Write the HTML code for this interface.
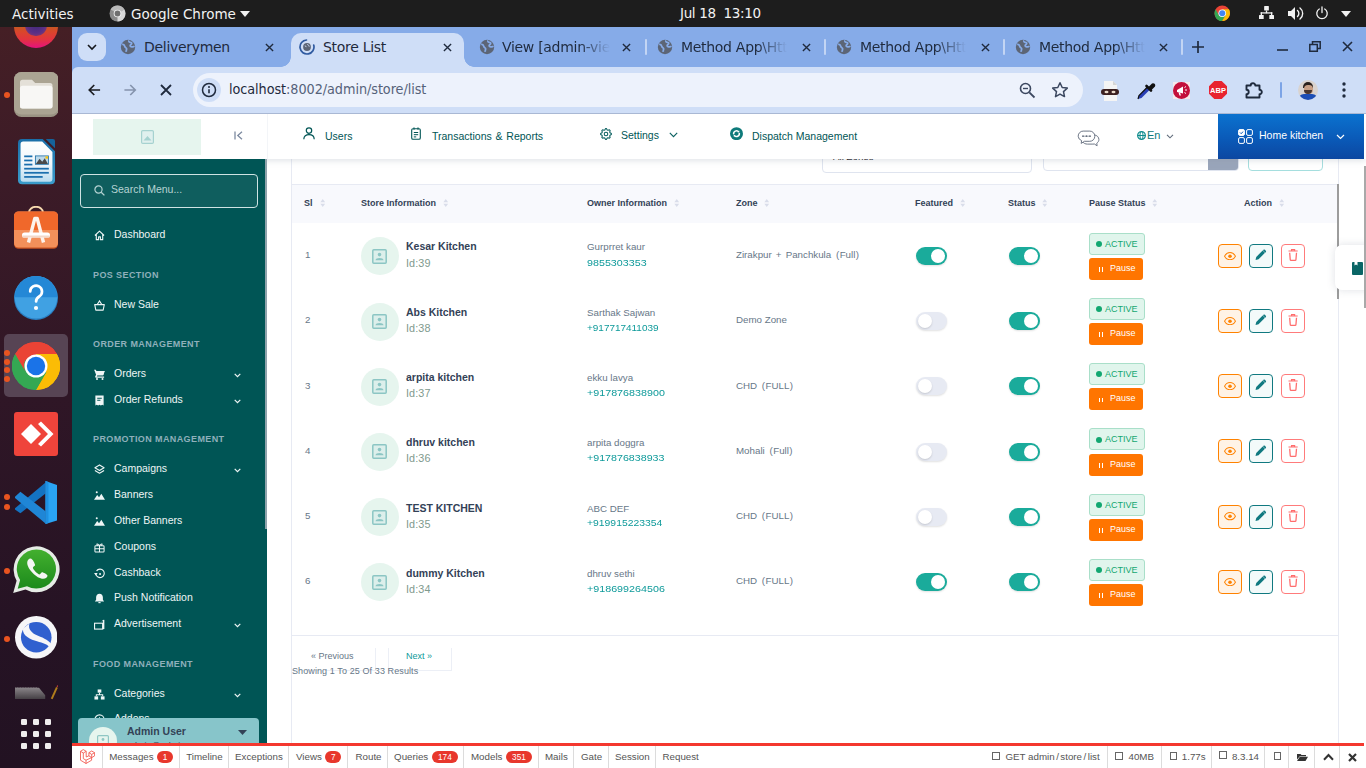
<!DOCTYPE html>
<html lang="en">
<head>
<meta charset="utf-8">
<title>Store List</title>
<style>
*{box-sizing:border-box;margin:0;padding:0}
html,body{width:1366px;height:768px;overflow:hidden;background:#fff;font-family:"Liberation Sans",sans-serif;}
.abs{position:absolute}
#screen{position:relative;width:1366px;height:768px;overflow:hidden;background:#fff}
/* ---------- GNOME top bar ---------- */
#topbar{position:absolute;left:0;top:0;width:1366px;height:27px;background:#1d1d1d;color:#f2f2f2;font-family:"DejaVu Sans","Liberation Sans",sans-serif;font-size:13.5px}
#topbar span{position:absolute;top:1px;line-height:27px;white-space:nowrap}
/* ---------- Dock ---------- */
#dock{position:absolute;left:0;top:27px;width:72px;height:741px;background:#2b1426;overflow:hidden}
/* ---------- Chrome ---------- */
#tabstrip{position:absolute;left:72px;top:27px;width:1294px;height:48px;background:#86abe8}
#toolbar{position:absolute;left:72px;top:67px;width:1294px;height:47px;background:#cfdef7;border-bottom:1px solid #a9b8d4;border-radius:6px 0 0 0}
.tabtxt{position:absolute;top:10px;font-family:"DejaVu Sans","Liberation Sans",sans-serif;font-size:14px;color:#1f2a3d;white-space:nowrap;line-height:20px;letter-spacing:-0.3px}
.fade{overflow:hidden;-webkit-mask-image:linear-gradient(90deg,#000 72%,rgba(0,0,0,0) 100%);mask-image:linear-gradient(90deg,#000 72%,rgba(0,0,0,0) 100%)}
/* ---------- Page ---------- */
#page{position:absolute;left:72px;top:114px;width:1294px;height:654px;background:#fff;overflow:hidden}
#hdr{position:absolute;left:0;top:0;width:1294px;height:45px;background:#fff;box-shadow:0 2px 6px rgba(140,152,164,.25);z-index:5}
#side{position:absolute;left:0;top:45px;width:195px;height:585px;background:#005555;overflow:hidden;z-index:6}
#main{position:absolute;left:195px;top:45px;width:1099px;height:585px;background:#fff;overflow:hidden}

#hdr .nav{position:absolute;top:0;height:45px;line-height:45px;font-size:10.500px;color:#005555;white-space:nowrap}
#side .it{position:absolute;left:42px;font-size:10.500px;color:#eef6f6;white-space:nowrap;line-height:14px}
#side .sec{position:absolute;left:21px;font-size:9px;font-weight:700;color:#8fb0bb;letter-spacing:.400px;white-space:nowrap;line-height:12px}
#side svg.ic{position:absolute;left:21.500px}
#side svg.chev{position:absolute;left:162px}

#main .th{position:absolute;top:38px;font-size:9px;font-weight:700;color:#334257;white-space:nowrap;line-height:12px}
#main .t{position:absolute;font-size:9.750px;color:#677788;white-space:nowrap;line-height:12px}
#main .nm{position:absolute;font-size:10.500px;font-weight:700;color:#334257;white-space:nowrap;line-height:13px}
#main .id{position:absolute;font-size:10.800px;color:#7f9a8e;letter-spacing:.1px;white-space:nowrap;line-height:13px}
#main .ph{color:#0e9a9a}
#main .av{position:absolute;width:38px;height:38px;border-radius:19px;background:#e6f5ee}
#main .tg{position:absolute;width:31px;height:18px;border-radius:9px;background:#1aab9b;box-shadow:0 1px 2px rgba(0,0,0,.12)}
#main .tg i{position:absolute;left:15px;top:2px;width:14px;height:14px;border-radius:7px;background:#fff}
#main .tg.off{background:#e7eaf3}
#main .tg.off i{left:2px;box-shadow:0 1px 2px rgba(0,0,0,.15)}
#main .ac{position:absolute;left:822px;width:56px;height:22px;border:1px solid #a9dfc9;border-radius:3px;background:#e0f5ec;color:#12a771;font-size:9px;line-height:20px;white-space:nowrap}
#main .ac b{position:absolute;left:6px;top:7.200px;width:6px;height:6px;border-radius:3px;background:#12a771}
#main .ac span{position:absolute;left:15px;top:0}
#main .pa{position:absolute;left:822px;width:54px;height:22px;border-radius:3px;background:#ff7500;color:#fff;font-size:9px;line-height:21px;white-space:nowrap}
#main .pa b{position:absolute;left:9.700px;top:9.200px;width:4.600px;height:4.800px;border-left:1.800px solid #fff;border-right:1.800px solid #fff}
#main .pa span{position:absolute;left:21px;top:0}
#main .bt{position:absolute;width:24px;height:24px;border-radius:4px;border:1px solid}
#main .bt svg{position:absolute}

#dbg span.d{position:absolute;top:5px;font-size:9.750px;line-height:12px;color:#555;white-space:nowrap}
#dbg i.s{position:absolute;top:0;width:1px;height:22px;background:#dcdcdc}
#dbg b.bd{position:absolute;top:5px;height:12px;border-radius:6px;background:#e8372c;color:#fff;font-size:8.250px;line-height:13px;font-weight:400;text-align:center}
#dbg u.bx{position:absolute;width:7.500px;height:8px;border:1px solid #666;text-decoration:none}
#dbg{position:absolute;left:0;top:629px;width:1292px;height:25px;background:#fff;border-top:3px solid #f4382f;z-index:9;font-size:11px;color:#444}
</style>
</head>
<body>
<div id="screen">
<!--TOPBAR-->
<div id="topbar">
<span style="left:12px">Activities</span>
<svg class="abs" style="left:109px;top:5px" width="17" height="17" viewBox="0 0 17 17"><circle cx="8.5" cy="8.5" r="8" fill="#8a8a8a"/><path d="M8.5 8.5 L1.6 4.5 A8 8 0 0 1 15.4 4.5 Z" fill="#b9b9b9"/><path d="M8.5 8.5 L15.4 4.5 A8 8 0 0 1 8.5 16.5 Z" fill="#d8d8d8"/><circle cx="8.5" cy="8.5" r="3.8" fill="#f2f2f2"/><circle cx="8.5" cy="8.5" r="2.9" fill="#6f6f6f"/></svg>
<span style="left:131px">Google Chrome</span>
<svg class="abs" style="left:240px;top:11px" width="10" height="6" viewBox="0 0 10 6"><path d="M0 0h10L5 6z" fill="#f2f2f2"/></svg>
<span style="left:680px;top:0;letter-spacing:-.35px">Jul 18&nbsp; 13:10</span>
<svg class="abs" style="left:1213.700px;top:4.800px" width="16.500" height="16.500" viewBox="0 0 17 17"><circle cx="8.5" cy="8.5" r="8" fill="#ea4335"/><path d="M8.5 8.5 L1.6 12.5 A8 8 0 0 0 8.5 16.5 L12 10.5z" fill="#34a853"/><path d="M1.6 4.5 A8 8 0 0 0 8.5 16.5 L5 10.5z" fill="#34a853"/><path d="M8.5 16.5 A8 8 0 0 0 15.4 4.5 L8.5 4.5 L12 10.5z" fill="#fbbc05"/><circle cx="8.5" cy="8.5" r="3.9" fill="#fff"/><circle cx="8.5" cy="8.5" r="3.1" fill="#4285f4"/></svg>
<svg class="abs" style="left:1259px;top:5.500px" width="15" height="13.500" viewBox="0 0 16 15" preserveAspectRatio="none"><g fill="#f2f2f2"><rect x="5.5" y="0" width="5" height="5" rx=".6"/><rect x="0" y="10" width="5" height="5" rx=".6"/><rect x="11" y="10" width="5" height="5" rx=".6"/><rect x="7.3" y="5" width="1.4" height="3"/><rect x="1.8" y="7" width="12.4" height="1.4"/><rect x="1.8" y="7" width="1.4" height="3"/><rect x="12.8" y="7" width="1.4" height="3"/></g></svg>
<svg class="abs" style="left:1287.500px;top:5.500px" width="18" height="15" viewBox="0 0 18 15"><path d="M0 5h3l4-4v13l-4-4H0z" fill="#f2f2f2"/><path d="M9.5 4.5a4 4 0 0 1 0 6M12 2a7 7 0 0 1 0 11" fill="none" stroke="#f2f2f2" stroke-width="1.4" stroke-linecap="round"/></svg>
<svg class="abs" style="left:1315px;top:5.500px" width="14" height="14" viewBox="0 0 15 15"><path d="M4.6 3.2a5.6 5.6 0 1 0 5.8 0" fill="none" stroke="#f2f2f2" stroke-width="1.4" stroke-linecap="round"/><path d="M7.5 1v6" stroke="#f2f2f2" stroke-width="1.4" stroke-linecap="round"/></svg>
<svg class="abs" style="left:1341px;top:10.500px" width="10" height="6" viewBox="0 0 10 6"><path d="M0 0h10L5 6z" fill="#f2f2f2"/></svg>
</div>
<!--DOCK-->
<div id="dock">
<div class="abs" style="left:0;top:0;width:72px;height:741px;background:linear-gradient(180deg,#451f25 0,#3c1b27 20%,#2f1626 50%,#261324 80%,#221222 100%)"></div>
<!-- firefox (cut) -->
<div class="abs" style="left:14px;top:-23px;width:44px;height:44px;border-radius:22px;background:linear-gradient(180deg,#b8621f 45%,#d9472a 62%,#e2343f 80%,#e5127e 100%)"></div><div class="abs" style="left:25px;top:-12px;width:22px;height:21px;border-radius:11px;background:radial-gradient(circle at 50% 45%,#3f2a78 0,#5a2f86 55%,#8a3a6a 85%,#c9502e 100%)"></div>
<!-- files -->
<div class="abs" style="left:4px;top:65px;width:6px;height:6px;border-radius:3px;background:#e95420"></div>
<svg class="abs" style="left:13.700px;top:44.700px" width="44.500" height="45" viewBox="0 0 44.500 45"><rect x="0" y="0" width="44.500" height="45" rx="7.500" fill="#9a9383"/><rect x="0" y="0" width="44.500" height="42.500" rx="7.500" fill="#aba493"/><path d="M6 10.200a2.500 2.500 0 0 1 2.500-2.500h9.500l3.200 3.300h14.800a2.500 2.500 0 0 1 2.500 2.500v20.400a2.500 2.500 0 0 1-2.500 2.500h-27.500a2.500 2.500 0 0 1-2.500-2.500z" fill="#e4e0d8"/><rect x="6" y="13.800" width="32.500" height="22.600" rx="2.500" fill="#f8f7f5"/></svg>
<!-- writer -->
<svg class="abs" style="left:17.800px;top:112.300px" width="37" height="45.300" viewBox="0 0 36 44"><defs><linearGradient id="wg" x1="0" y1="0" x2="0" y2="1"><stop offset="0" stop-color="#fdfefe"/><stop offset=".55" stop-color="#f1f7fb"/><stop offset="1" stop-color="#b9dcef"/></linearGradient><linearGradient id="wb" x1="0" y1="0" x2="0" y2="1"><stop offset="0" stop-color="#1a6ea8"/><stop offset="1" stop-color="#3a9ccb"/></linearGradient></defs><path d="M4 0h20l12 12v28a4 4 0 0 1-4 4H4a4 4 0 0 1-4-4V4a4 4 0 0 1 4-4z" fill="url(#wb)"/><path d="M5 2.500h18.500l10 10V39a2.500 2.500 0 0 1-2.500 2.500H5A2.500 2.500 0 0 1 2.500 39V5A2.500 2.500 0 0 1 5 2.500z" fill="url(#wg)"/><path d="M27 0h7a2 2 0 0 1 2 2v7z" fill="#15639b"/><rect x="16.500" y="16" width="13.500" height="9" fill="#1d6fa5"/><rect x="17.300" y="16.800" width="11.900" height="7.400" fill="#bcd9ea"/><path d="M17.300 24.200l3.700-5 2.600 3 2.400-3.500 3.200 5.500z" fill="#4a4a4a"/><rect x="26.700" y="16.800" width="2.500" height="2.300" fill="#f5c211"/><g fill="#1a6fae"><rect x="6" y="16" width="8" height="1.700"/><rect x="6" y="20" width="8" height="1.700"/><rect x="6" y="24" width="8" height="1.700"/><rect x="6" y="28" width="24" height="1.700"/><rect x="6" y="32" width="24" height="1.700"/><rect x="6" y="36" width="18" height="1.700"/></g></svg>
<!-- software -->
<svg class="abs" style="left:14px;top:179px" width="44" height="43" viewBox="0 0 44 43"><path d="M15 8V6.500a7 5.700 0 0 1 14 0V8" fill="none" stroke="#f6d9ae" stroke-width="1.900"/><rect x="0" y="6" width="44" height="36.800" rx="4.500" fill="#c9521f"/><rect x="0" y="5.400" width="44" height="36.200" rx="4.500" fill="#f3905a"/><path d="M0 24V9.900a4.500 4.500 0 0 1 4.500-4.500h35a4.500 4.500 0 0 1 4.500 4.500V24z" fill="#f0682b"/><path d="M14.500 36.500L20.800 12.500h2.400L29.500 36.500" fill="none" stroke="#fdf3ec" stroke-width="3.400" stroke-linejoin="round"/><rect x="8" y="26.400" width="28" height="5.200" rx="2.600" fill="#fff"/><rect x="8" y="29.400" width="28" height="2.200" rx="1.100" fill="#f3d9c9"/></svg>
<!-- help -->
<svg class="abs" style="left:14px;top:249px" width="44" height="44" viewBox="0 0 44 44"><circle cx="22" cy="22" r="22" fill="#2a7fc2"/><circle cx="22" cy="21.300" r="21.300" fill="#40a1e3"/><path d="M.7 21.300a21.300 21.300 0 0 1 42.600 0z" fill="#2488d6"/><path d="M16.200 15.500a5.900 5.900 0 1 1 9 5c-2.200 1.400-3.100 2.400-3.100 5" fill="none" stroke="#fff" stroke-width="2.700" stroke-linecap="round"/><circle cx="22" cy="32" r="2.100" fill="#fff"/></svg>
<!-- chrome active -->
<div class="abs" style="left:4px;top:307px;width:64px;height:63px;border-radius:5px;background:#574454"></div>
<div class="abs" style="left:4px;top:323.2px;width:6px;height:6px;border-radius:3px;background:#e95420"></div><div class="abs" style="left:4px;top:331.8px;width:6px;height:6px;border-radius:3px;background:#e95420"></div><div class="abs" style="left:4px;top:340.4px;width:6px;height:6px;border-radius:3px;background:#e95420"></div><div class="abs" style="left:4px;top:349px;width:6px;height:6px;border-radius:3px;background:#e95420"></div>
<svg class="abs" style="left:12px;top:315px" width="48" height="48" viewBox="0 0 48 48"><circle cx="24" cy="24" r="24" fill="#fff" opacity="0"/><path d="M24 24L3.200 12A24 24 0 0 1 44.800 12z" fill="#ea4335"/><path d="M24 0A24 24 0 0 1 44.800 12H24z" fill="#ea4335"/><path d="M3.200 12A24 24 0 0 0 24 48l10.400-18L24 24z" fill="#34a853"/><path d="M3.200 12L13.600 30 24 24z" fill="#34a853"/><path d="M44.800 12A24 24 0 0 1 24 48l10.400-18L24 12z" fill="#fbbc05"/><circle cx="24" cy="24" r="12" fill="#34a853" opacity="0"/><path d="M24 12h20.800A24 24 0 0 1 24 48l10.400-18z" fill="#fbbc05"/><path d="M13.600 30L3.200 12A24 24 0 0 0 24 48l10.400-18z" fill="#34a853"/><path d="M3.200 12A24 24 0 0 1 44.800 12H24a12 12 0 0 0-10.400 18z" fill="#ea4335"/><circle cx="24" cy="24" r="11.500" fill="#fff"/><circle cx="24" cy="24" r="9.200" fill="#1a73e8"/></svg>
<!-- anydesk -->
<svg class="abs" style="left:14px;top:385px" width="44" height="44" viewBox="0 0 44 44"><rect width="44" height="44" rx="3" fill="#ef443b"/><path d="M17 12l10 10-10 10L7 22z" fill="#fff"/><path d="M24 12l3-2.500L39.500 22 27 34.500 24 32l10-10z" fill="#fff"/></svg>
<!-- vscode -->
<div class="abs" style="left:4px;top:467px;width:6px;height:6px;border-radius:3px;background:#e95420"></div><div class="abs" style="left:4px;top:477px;width:6px;height:6px;border-radius:3px;background:#e95420"></div>
<svg class="abs" style="left:14.900px;top:453.500px" width="42" height="43" viewBox="0 0 42 43"><path d="M0 27.200L30.500 1.400v11L5.400 32.300 0 28.500z" fill="#1473c2"/><path d="M0 15.800L5.400 10.700 30.500 30.200V42.500L0 17z" fill="#1f86d6"/><path d="M30.500 0L42 4v35.500L30.500 43z" fill="#2aa4f4"/><path d="M30.500 0l3 1v41l-3 1z" fill="#1e90e2"/></svg>
<!-- whatsapp -->
<div class="abs" style="left:4px;top:541px;width:6px;height:6px;border-radius:3px;background:#e95420"></div>
<svg class="abs" style="left:12px;top:519px" width="48" height="48" viewBox="0 0 48 48"><defs><linearGradient id="wag" x1="0" y1="0" x2="0" y2="1"><stop offset="0" stop-color="#43b02f"/><stop offset="1" stop-color="#1c8a1c"/></linearGradient></defs><path d="M1.200 47l3.400-12.300A23 23 0 1 1 13.500 43.500z" fill="#e6ece6"/><path d="M5.700 42.700l2.400-8.800A19.600 19.600 0 1 1 15 40.200z" fill="url(#wag)"/><path d="M18.500 12.500c-1.600 0-3.300 1.700-3.300 4.300 0 6.300 9.600 16 16 16 2.600 0 4.300-1.700 4.300-3.300 0-.9-4.300-3.300-5.300-3.300s-1.700 2.200-2.700 2.200c-1.700 0-6.600-4.900-6.600-6.600 0-1 2.200-1.700 2.200-2.700s-2.400-6.600-4.600-6.600z" fill="#f4f6f4"/></svg>
<!-- simplenote -->
<div class="abs" style="left:4px;top:609px;width:6px;height:6px;border-radius:3px;background:#e95420"></div>
<svg class="abs" style="left:14.800px;top:589.300px" width="42.500" height="42.500" viewBox="0 0 42.500 42.500"><circle cx="21.250" cy="21.250" r="21.250" fill="#f6f6f8"/><circle cx="21.250" cy="21.250" r="15.300" fill="#3060cf"/><path d="M14.500 7.500C12.500 13 17 17.500 23 19.800S35 25 36.800 29.500L36 32.500C33 28.500 28 27 22 25.300S7 20 8 12.500z" fill="#f6f6f8"/></svg>
<!-- editor (cut) -->
<svg class="abs" style="left:14.800px;top:658px" width="43" height="15" viewBox="0 0 43 15"><defs><linearGradient id="edg" x1="0" y1="0" x2="0" y2="1"><stop offset="0" stop-color="#8d888c"/><stop offset="1" stop-color="#454045"/></linearGradient></defs><path d="M0 2.800l.8-.6.800.6.800-.6.800.6.800-.6.800.6.800-.6.800.6.800-.6.800.6.800-.6.800.6.800-.6.800.6.800-.6.800.6.800-.6.800.6.800-.6.800.6.800-.6.800.6.800-.6.800.6.800-.6.800.6.800-.6.800.6H24l6.200 7.500V14H0z" fill="url(#edg)"/><path d="M35.800 13.500l5.200-11.500 1.800.8-5.200 11.500z" fill="#b07d1c"/><path d="M41.500 1.500l.6-1.300 1.300.6-.6 1.300z" fill="#c43a3a"/></svg>
<!-- apps grid -->
<svg class="abs" style="left:21px;top:692px" width="30" height="30" viewBox="0 0 30 30"><g fill="#f0eeee"><rect x="0" y="0" width="6" height="6" rx="1.300"/><rect x="12" y="0" width="6" height="6" rx="1.300"/><rect x="24" y="0" width="6" height="6" rx="1.300"/><rect x="0" y="12" width="6" height="6" rx="1.300"/><rect x="12" y="12" width="6" height="6" rx="1.300"/><rect x="24" y="12" width="6" height="6" rx="1.300"/><rect x="0" y="24" width="6" height="6" rx="1.300"/><rect x="12" y="24" width="6" height="6" rx="1.300"/><rect x="24" y="24" width="6" height="6" rx="1.300"/></g></svg>
</div>
<!--CHROME-->
<div id="tabstrip">
<div class="abs" style="left:6px;top:6px;width:28px;height:28px;border-radius:9px;background:#cfdef7"></div>
<svg class="abs" style="left:15px;top:17px" width="10" height="7" viewBox="0 0 10 7"><path d="M1 1l4 4 4-4" stroke="#16181d" stroke-width="1.600" fill="none"/></svg>
<svg class="abs" style="left:48px;top:12px" width="16" height="16" viewBox="0 0 16 16"><circle cx="8" cy="8" r="7.200" fill="#5c6576"/><path d="M2.2 5.2c1.6.2 2.4 1 2.6 2.2.2 1.200 1.500 1.200 1.800 2.400.2 1 -.6 1.600 -.4 3.000M9 1.500c-.6 1.200 .4 1.800 1.600 1.800 1.400 0 1.400 1.600 .4 2.200-1 .6-1.200 1.800 0 2.200 1.400 .4 2.600 .2 3.400 -.600" fill="none" stroke="#86abe8" stroke-width="1.800"/></svg><span class="tabtxt" style="left:72px">Deliverymen</span><svg class="abs" style="left:192.5px;top:15.500px" width="9" height="9" viewBox="0 0 10 10"><path d="M1 1l8 8M9 1l-8 8" stroke="#1f2a3d" stroke-width="1.5" fill="none"/></svg><div class="abs" style="left:219px;top:6px;width:173px;height:34px;background:#cfdef7;border-radius:10px 10px 0 0"></div>
<div class="abs" style="left:209px;top:30px;width:10px;height:10px;background:radial-gradient(circle at 0 0,rgba(0,0,0,0) 9.5px,#cfdef7 10px)"></div>
<div class="abs" style="left:392px;top:30px;width:10px;height:10px;background:radial-gradient(circle at 100% 0,rgba(0,0,0,0) 9.5px,#cfdef7 10px)"></div>
<svg class="abs" style="left:227px;top:12px" width="16" height="16" viewBox="0 0 16 16"><path d="M7.500 1.020A7 7 0 1 0 14.760 6.190" fill="none" stroke="#2f5aa0" stroke-width="1.700" stroke-linecap="round"/><circle cx="8" cy="8" r="3.900" fill="#5c6576"/><path d="M5.800 6.800c.9.100 1.300.6 1.500 1.300M8.600 5c-.2.900.5 1.100 1.100 1.300.5.300.2 1 .5 1.400" fill="none" stroke="#cfdef7" stroke-width=".9"/></svg>
<span class="tabtxt" style="left:251px">Store List</span><svg class="abs" style="left:371px;top:15.500px" width="9" height="9" viewBox="0 0 10 10"><path d="M1 1l8 8M9 1l-8 8" stroke="#1f2a3d" stroke-width="1.5" fill="none"/></svg><svg class="abs" style="left:407px;top:12px" width="16" height="16" viewBox="0 0 16 16"><circle cx="8" cy="8" r="7.200" fill="#5c6576"/><path d="M2.2 5.2c1.6.2 2.4 1 2.6 2.2.2 1.200 1.500 1.200 1.800 2.400.2 1 -.6 1.600 -.4 3.000M9 1.500c-.6 1.200 .4 1.800 1.600 1.800 1.400 0 1.400 1.600 .4 2.200-1 .6-1.200 1.800 0 2.200 1.400 .4 2.600 .2 3.400 -.600" fill="none" stroke="#86abe8" stroke-width="1.800"/></svg><span class="tabtxt fade" style="left:430px;width:108px">View [admin-vie</span><svg class="abs" style="left:550.300px;top:15.500px" width="9" height="9" viewBox="0 0 10 10"><path d="M1 1l8 8M9 1l-8 8" stroke="#1f2a3d" stroke-width="1.5" fill="none"/></svg><div class="abs" style="left:573px;top:12px;width:2px;height:16px;background:#c3d5f4;border-radius:1px"></div><svg class="abs" style="left:585px;top:12px" width="16" height="16" viewBox="0 0 16 16"><circle cx="8" cy="8" r="7.200" fill="#5c6576"/><path d="M2.2 5.2c1.6.2 2.4 1 2.6 2.2.2 1.200 1.500 1.200 1.800 2.400.2 1 -.6 1.600 -.4 3.000M9 1.500c-.6 1.200 .4 1.800 1.600 1.800 1.400 0 1.400 1.600 .4 2.200-1 .6-1.200 1.800 0 2.200 1.400 .4 2.600 .2 3.400 -.600" fill="none" stroke="#86abe8" stroke-width="1.800"/></svg><span class="tabtxt fade" style="left:609px;width:106px">Method App\Http</span><svg class="abs" style="left:729.7px;top:15.500px" width="9" height="9" viewBox="0 0 10 10"><path d="M1 1l8 8M9 1l-8 8" stroke="#1f2a3d" stroke-width="1.5" fill="none"/></svg><div class="abs" style="left:752px;top:12px;width:2px;height:16px;background:#c3d5f4;border-radius:1px"></div><svg class="abs" style="left:764px;top:12px" width="16" height="16" viewBox="0 0 16 16"><circle cx="8" cy="8" r="7.200" fill="#5c6576"/><path d="M2.2 5.2c1.6.2 2.4 1 2.6 2.2.2 1.200 1.500 1.200 1.800 2.400.2 1 -.6 1.600 -.4 3.000M9 1.500c-.6 1.200 .4 1.800 1.600 1.800 1.400 0 1.400 1.600 .4 2.200-1 .6-1.200 1.800 0 2.200 1.400 .4 2.600 .2 3.400 -.600" fill="none" stroke="#86abe8" stroke-width="1.800"/></svg><span class="tabtxt fade" style="left:788px;width:106px">Method App\Http</span><svg class="abs" style="left:908.7px;top:15.500px" width="9" height="9" viewBox="0 0 10 10"><path d="M1 1l8 8M9 1l-8 8" stroke="#1f2a3d" stroke-width="1.5" fill="none"/></svg><div class="abs" style="left:931px;top:12px;width:2px;height:16px;background:#c3d5f4;border-radius:1px"></div><svg class="abs" style="left:943px;top:12px" width="16" height="16" viewBox="0 0 16 16"><circle cx="8" cy="8" r="7.200" fill="#5c6576"/><path d="M2.2 5.2c1.6.2 2.4 1 2.6 2.2.2 1.200 1.500 1.200 1.800 2.400.2 1 -.6 1.600 -.4 3.000M9 1.500c-.6 1.200 .4 1.800 1.600 1.800 1.400 0 1.400 1.600 .4 2.200-1 .6-1.200 1.800 0 2.200 1.400 .4 2.600 .2 3.400 -.600" fill="none" stroke="#86abe8" stroke-width="1.800"/></svg><span class="tabtxt fade" style="left:967px;width:106px">Method App\Http</span><svg class="abs" style="left:1086.7px;top:15.500px" width="9" height="9" viewBox="0 0 10 10"><path d="M1 1l8 8M9 1l-8 8" stroke="#1f2a3d" stroke-width="1.5" fill="none"/></svg><div class="abs" style="left:1109px;top:12px;width:2px;height:16px;background:#c3d5f4;border-radius:1px"></div><svg class="abs" style="left:1120px;top:14px" width="12" height="12" viewBox="0 0 12 12"><path d="M6 0v12M0 6h12" stroke="#1f2a3d" stroke-width="1.700"/></svg>
<svg class="abs" style="left:1205px;top:22px" width="11" height="2" viewBox="0 0 11 2"><path d="M0 1h11" stroke="#1f2a3d" stroke-width="1.600"/></svg>
<svg class="abs" style="left:1237px;top:14px" width="12" height="11" viewBox="0 0 12 11"><path d="M.8 3.500h7.500v6.700H.8z" fill="none" stroke="#1f2a3d" stroke-width="1.500"/><path d="M3.500 3V.8h7.700v6.700H8.600" fill="none" stroke="#1f2a3d" stroke-width="1.500"/></svg>
<svg class="abs" style="left:1270px;top:14px" width="11" height="11" viewBox="0 0 11 11"><path d="M1 1l9 9M10 1l-9 9" stroke="#1f2a3d" stroke-width="1.600" fill="none"/></svg>
</div>
<div id="toolbar">
<svg class="abs" style="left:16px;top:17px" width="12.500" height="12" viewBox="0 0 15 14"><path d="M14.500 7H2M7.500 1L1.500 7l6 6" stroke="#1b1d22" stroke-width="2" fill="none"/></svg>
<svg class="abs" style="left:52px;top:17px" width="12.500" height="12" viewBox="0 0 15 14"><path d="M.5 7H13M7.500 1l6 6-6 6" stroke="#8593ad" stroke-width="2" fill="none"/></svg>
<svg class="abs" style="left:88px;top:17px" width="12" height="12" viewBox="0 0 12 12"><path d="M1 1l10 10M11 1L1 11" stroke="#1f2a3d" stroke-width="1.800" fill="none"/></svg>
<div class="abs" style="left:121px;top:6px;width:890px;height:34px;border-radius:17px;background:#edf2fc"></div>
<div class="abs" style="left:125px;top:11px;width:24px;height:24px;border-radius:12px;background:#cfdef7"></div>
<svg class="abs" style="left:129px;top:15px" width="16" height="16" viewBox="0 0 16 16"><circle cx="8" cy="8" r="6.500" fill="none" stroke="#1f2a3d" stroke-width="1.500"/><path d="M8 7.200v4" stroke="#1f2a3d" stroke-width="1.600"/><circle cx="8" cy="5" r="1" fill="#1f2a3d"/></svg>
<span class="abs" style="left:157px;top:12px;font-family:'DejaVu Sans Condensed','DejaVu Sans','Liberation Sans',sans-serif;font-size:14.250px;line-height:20px;color:#1f2a3d;white-space:nowrap;letter-spacing:-.05px">localhost<span style="color:#56627a">:8002/admin/store/list</span></span>
<svg class="abs" style="left:947px;top:15px" width="17" height="17" viewBox="0 0 17 17"><circle cx="6.500" cy="6.500" r="5" fill="none" stroke="#3c4860" stroke-width="1.600"/><path d="M10.300 10.300L15.500 15.500" stroke="#3c4860" stroke-width="1.800"/><path d="M4 6.500h5" stroke="#3c4860" stroke-width="1.400"/></svg>
<svg class="abs" style="left:979px;top:14px" width="18" height="18" viewBox="0 0 18 18"><path d="M9 1.800l2.200 4.700 5.100.6-3.800 3.500 1 5-4.500-2.500-4.500 2.500 1-5L1.700 7.100l5.100-.6z" fill="none" stroke="#3c4860" stroke-width="1.500" stroke-linejoin="round"/></svg>
<!-- extensions -->
<svg class="abs" style="left:1029px;top:14px" width="18" height="20" viewBox="0 0 18 20"><path d="M3 0h9l4 4v16H3z" fill="#f4f4f4"/><path d="M12 0l4 4h-4z" fill="#d5d5d5"/><rect x="0" y="8" width="18" height="6" rx="3" fill="#3b1f1f"/><ellipse cx="5.500" cy="11" rx="2" ry="1.300" fill="#e9d9c9"/><ellipse cx="12.500" cy="11" rx="2" ry="1.300" fill="#e9d9c9"/></svg>
<svg class="abs" style="left:1065px;top:14px" width="19" height="19" viewBox="0 0 19 19"><path d="M1 18l1-3.500 8-8 2.500 2.500-8 8z" fill="#2a3fb5"/><path d="M9.500 5l4.500 4.500" stroke="#111" stroke-width="2.600" stroke-linecap="round"/><path d="M11 6.500l4-4a2.200 2.200 0 0 1 3 3l-4 4z" fill="#111"/><path d="M1 18l1-3.500 8-8" stroke="#111" stroke-width="1.200" fill="none"/></svg>
<svg class="abs" style="left:1101px;top:15px" width="17" height="17" viewBox="0 0 17 17"><rect width="17" height="17" fill="#f6e9ec"/><circle cx="8.500" cy="8.500" r="8.500" fill="#c3103c"/><path d="M4 8l6-3.500v7L4 10z" fill="#fff"/><path d="M5.500 10.500l1 3h1.500l-1-3" fill="#fff"/><path d="M11.500 5.500l1.500-1M12 8h2M11.500 10.500l1.500 1" stroke="#fff" stroke-width="1"/></svg>
<svg class="abs" style="left:1137px;top:14px" width="18" height="18" viewBox="0 0 18 18"><path d="M5.300 0h7.400L18 5.300v7.400L12.700 18H5.300L0 12.700V5.300z" fill="#e8232f"/><text x="9" y="12" font-family="Liberation Sans, sans-serif" font-weight="700" font-size="7.500" fill="#fff" text-anchor="middle">ABP</text></svg>
<svg class="abs" style="left:1172px;top:13px" width="20" height="20" viewBox="0 0 20 20"><path d="M2.500 5.500h4.200a2.300 2.300 0 1 1 4.600 0h4.200v4.200a2.300 2.300 0 1 1 0 4.600v3.200H2.500v-3.400a2.200 2.200 0 1 0 0-4.400z" fill="none" stroke="#1f2a3d" stroke-width="1.900" stroke-linejoin="round"/></svg>
<div class="abs" style="left:1208px;top:15px;width:2px;height:16px;border-radius:1px;background:#7da4e6"></div>
<div class="abs" style="left:1226px;top:13px;width:20px;height:20px;border-radius:10px;overflow:hidden;background:#d9d3cf"><div class="abs" style="left:5px;top:2px;width:10px;height:6px;border-radius:5px 5px 0 0;background:#2a211d"></div><div class="abs" style="left:5.500px;top:5px;width:9px;height:9px;border-radius:4px;background:#c89f85"></div><div class="abs" style="left:6px;top:10px;width:8px;height:4px;border-radius:0 0 4px 4px;background:#4a372f"></div><div class="abs" style="left:0;top:14px;width:20px;height:8px;border-radius:6px 6px 0 0;background:#1b4db5"></div></div>
<svg class="abs" style="left:1270px;top:14px" width="4" height="18" viewBox="0 0 4 18"><circle cx="2" cy="3" r="1.700" fill="#1f2a3d"/><circle cx="2" cy="9" r="1.700" fill="#1f2a3d"/><circle cx="2" cy="15" r="1.700" fill="#1f2a3d"/></svg>
</div>
<!--PAGE-->
<div id="page">
<div id="hdr">
<div class="abs" style="left:21px;top:5px;width:108px;height:36px;background:#e6f5ee"></div>
<svg class="abs" style="left:69px;top:16px" width="13" height="14" viewBox="0 0 13 14"><rect x=".6" y=".6" width="11.800" height="12.800" rx="1.200" fill="#e0f0ee" stroke="#a6d2d0" stroke-width="1.200"/><path d="M2.500 10.500l4-4.500 4 4.500z" fill="#a6d2d0"/></svg>
<svg class="abs" style="left:162px;top:17px" width="9" height="9" viewBox="0 0 9 9"><path d="M1 .5v8" stroke="#7d8aa0" stroke-width="1.300"/><path d="M8 .8L3.800 4.500 8 8.200" stroke="#7d8aa0" stroke-width="1.300" fill="none"/></svg>
<div class="abs" style="left:195px;top:0;width:1px;height:45px;background:#f3f5f8"></div>
<svg class="abs" style="left:231px;top:13px" width="12" height="13" viewBox="0 0 12 13"><circle cx="6" cy="3.600" r="2.700" fill="none" stroke="#005555" stroke-width="1.200"/><path d="M.8 12.200c0-3 2.200-4.600 5.200-4.600s5.200 1.600 5.200 4.600" fill="none" stroke="#005555" stroke-width="1.200"/></svg>
<span class="nav" style="left:253px">Users</span>
<svg class="abs" style="left:339px;top:13px" width="10" height="13" viewBox="0 0 10 13"><rect x=".7" y="1.700" width="8.600" height="10.600" rx="1.300" fill="none" stroke="#005555" stroke-width="1.100"/><path d="M3 .4v2.400M7 .4v2.400M2.800 5.500h4.400M2.800 7.700h4.400M2.800 9.900h2.400" stroke="#005555" stroke-width="1"/></svg>
<span class="nav" style="left:360px">Transactions <span style="margin:0 .9px">&amp;</span> Reports</span>
<svg class="abs" style="left:528px;top:14px" width="12" height="12" viewBox="0 0 12 12"><path d="M11.37 5.47L11.37 6.53L10.02 7.22L9.70 7.98L10.17 9.43L9.43 10.17L7.98 9.70L7.22 10.02L6.53 11.37L5.47 11.37L4.78 10.02L4.02 9.70L2.57 10.17L1.83 9.43L2.30 7.98L1.98 7.22L0.63 6.53L0.63 5.47L1.98 4.78L2.30 4.02L1.83 2.57L2.57 1.83L4.02 2.30L4.78 1.98L5.47 0.63L6.53 0.63L7.22 1.98L7.98 2.30L9.43 1.83L10.17 2.57L9.70 4.02L10.02 4.78z" fill="none" stroke="#0a6060" stroke-width="1.050" stroke-linejoin="round"/><circle cx="6" cy="6" r="1.800" fill="none" stroke="#0a6060" stroke-width="1.050"/></svg>
<span class="nav" style="left:549px;top:-1px">Settings</span>
<svg class="abs" style="left:597px;top:17.500px" width="9" height="6" viewBox="0 0 9 6"><path d="M.8.800l3.700 3.900L8.200.8" stroke="#0a6060" stroke-width="1.100" fill="none"/></svg>
<svg class="abs" style="left:658px;top:13.200px" width="13" height="13.300" viewBox="0 0 14 14"><circle cx="7" cy="7" r="7" fill="#0e7a7a"/><path d="M4 7.800a3.100 3.100 0 0 1 5.500-2.600M10 6.200a3.100 3.100 0 0 1-5.500 2.600" fill="none" stroke="#fff" stroke-width="1.600"/><path d="M9.900 3.600v2h-2zM4.100 10.400v-2h2z" fill="#fff"/></svg>
<span class="nav" style="left:680px">Dispatch Management</span>
<svg class="abs" style="left:1005px;top:14.500px" width="24" height="20" viewBox="0 0 24 20"><path d="M17.300 5.800c2.700.5 4.600 2.400 4.600 4.700 0 1.500-.8 2.800-2.100 3.600l.3 2.700-2.700-1.800c-.5.100-1 .1-1.500.1h-5.500c-2 0-3.800-.9-4.700-2.200" fill="none" stroke="#66707f" stroke-width=".95"/><path d="M6.200 2.100h6.600a5 5 0 0 1 5 5v.2a5 5 0 0 1-5 5H7.400l-3.200 2.100.4-2.800A5 5 0 0 1 1.200 7.300v-.2a5 5 0 0 1 5-5z" fill="#fff" stroke="#66707f" stroke-width=".95"/><path d="M5.500 7.200h8" stroke="#66707f" stroke-width=".6"/><circle cx="6" cy="7.200" r=".85" fill="#66707f"/><circle cx="9.500" cy="7.200" r=".85" fill="#66707f"/><circle cx="13" cy="7.200" r=".85" fill="#66707f"/></svg>
<svg class="abs" style="left:1064.800px;top:16.800px" width="9" height="9" viewBox="0 0 9 9"><circle cx="4.500" cy="4.500" r="3.800" fill="none" stroke="#0e8c8c" stroke-width="1.300"/><ellipse cx="4.500" cy="4.500" rx="1.600" ry="3.800" fill="none" stroke="#0e8c8c" stroke-width="1"/><path d="M.6 4.500h7.800" stroke="#0e8c8c" stroke-width="1"/></svg>
<span class="nav" style="left:1075px;color:#0e7a7a;font-size:11px;top:-1px">En</span>
<svg class="abs" style="left:1094px;top:20px" width="8" height="5" viewBox="0 0 8 5"><path d="M1 .8l3 3 3-3" stroke="#5f6b7a" stroke-width="1.100" fill="none"/></svg>
<div class="abs" style="left:1146px;top:0;width:146px;height:45px;background:linear-gradient(180deg,#0b72cf 0,#0a5ab8 55%,#0c47a1 100%)"></div>
<svg class="abs" style="left:1166px;top:15px" width="15" height="15" viewBox="0 0 15 15"><rect x=".6" y=".6" width="5.800" height="5.800" rx="1.400" fill="#fff" stroke="#fff" stroke-width="1"/><path d="M2 3.500l1.200 1.200L5 2.600" stroke="#0a5ab8" stroke-width="1" fill="none"/><rect x="8.600" y=".6" width="5.800" height="5.800" rx="1.400" fill="none" stroke="#fff" stroke-width="1"/><rect x=".6" y="8.600" width="5.800" height="5.800" rx="1.400" fill="none" stroke="#fff" stroke-width="1"/><rect x="8.600" y="8.600" width="5.800" height="5.800" rx="1.400" fill="none" stroke="#fff" stroke-width="1"/></svg>
<span class="nav" style="left:1187px;color:#fff;top:-1px">Home kitchen</span>
<svg class="abs" style="left:1264px;top:20px" width="9" height="6" viewBox="0 0 9 6"><path d="M1 1l3.500 3.500L8 1" stroke="#fff" stroke-width="1.200" fill="none"/></svg>
</div>
<div id="side">
<div class="abs" style="left:8px;top:15px;width:178px;height:34px;border:1px solid #cfe3e3;border-radius:4px;background:#0f5e5e"></div>
<svg class="abs" style="left:22px;top:26px" width="11" height="11" viewBox="0 0 11 11"><circle cx="4.500" cy="4.500" r="3.600" fill="none" stroke="#b6d3d3" stroke-width="1.200"/><path d="M7.200 7.200l3.200 3.200" stroke="#b6d3d3" stroke-width="1.300"/></svg>
<span class="abs" style="left:39px;top:23.200px;font-size:10.500px;line-height:14px;color:#b6d3d3;white-space:nowrap">Search Menu...</span>
<svg class="ic" style="top:70.5px" width="11" height="11" viewBox="0 0 12 12"><path d="M1 6L6 1.300 11 6M2.500 5v5.500h2.500V7.500h2V10.500h2.500V5" fill="none" stroke="#eef6f6" stroke-width="1.200" stroke-linejoin="round"/></svg><span class="it" style="top:68px">Dashboard</span>
<svg class="ic" style="top:140.5px" width="11" height="11" viewBox="0 0 12 12"><path d="M.8 5h10.400L10 11H2z" fill="none" stroke="#eef6f6" stroke-width="1.200" stroke-linejoin="round"/><path d="M3.500 5L6 1l2.500 4" fill="none" stroke="#eef6f6" stroke-width="1.200"/></svg><span class="it" style="top:138px">New Sale</span>
<svg class="ic" style="top:209.5px" width="11" height="11" viewBox="0 0 12 12"><path d="M0 .8h2l.6 1.500h9L10 6.800H3.800L3 8.300h8v1.200H2.200c-.8 0-1.200-.8-.8-1.500l.9-1.600L.6 2z" fill="#eef6f6"/><path d="M2.300 2.300h9.300L10 6.800H3.800z" fill="#eef6f6"/><circle cx="3.300" cy="10.800" r="1.100" fill="#eef6f6"/><circle cx="9.300" cy="10.800" r="1.100" fill="#eef6f6"/></svg><span class="it" style="top:207px">Orders</span><svg class="chev" style="top:213.5px" width="7" height="5" viewBox="0 0 7 5"><path d="M.7.800l2.800 2.800L6.300.8" stroke="#eef6f6" stroke-width="1.200" fill="none"/></svg>
<svg class="ic" style="top:235.5px" width="11" height="11" viewBox="0 0 12 12"><path d="M1.500.5h9v11l-1.500-1-1.500 1-1.500-1-1.500 1-1.500-1-1.500 1z" fill="#eef6f6"/><path d="M3.500 3.500h5M3.500 5.800h3.500" stroke="#005555" stroke-width="1.100"/></svg><span class="it" style="top:233px">Order Refunds</span><svg class="chev" style="top:239.5px" width="7" height="5" viewBox="0 0 7 5"><path d="M.7.800l2.800 2.800L6.300.8" stroke="#eef6f6" stroke-width="1.200" fill="none"/></svg>
<svg class="ic" style="top:304.5px" width="11" height="11" viewBox="0 0 12 12"><path d="M6 1l5 3-5 3-5-3z" fill="none" stroke="#eef6f6" stroke-width="1.200" stroke-linejoin="round"/><path d="M1 7l5 3 5-3" fill="none" stroke="#eef6f6" stroke-width="1.200" stroke-linejoin="round"/></svg><span class="it" style="top:302px">Campaigns</span><svg class="chev" style="top:308.5px" width="7" height="5" viewBox="0 0 7 5"><path d="M.7.800l2.800 2.800L6.300.8" stroke="#eef6f6" stroke-width="1.200" fill="none"/></svg>
<svg class="ic" style="top:330.5px" width="11" height="11" viewBox="0 0 12 12"><path d="M0 10.500l3.500-5 2 2.500L8 4l4 6.500z" fill="#eef6f6"/><circle cx="3" cy="2.500" r="1.100" fill="#eef6f6"/></svg><span class="it" style="top:328px">Banners</span>
<svg class="ic" style="top:356.5px" width="11" height="11" viewBox="0 0 12 12"><path d="M0 10.500l3.500-5 2 2.500L8 4l4 6.500z" fill="#eef6f6"/><circle cx="3" cy="2.500" r="1.100" fill="#eef6f6"/></svg><span class="it" style="top:354px">Other Banners</span>
<svg class="ic" style="top:382.5px" width="11" height="11" viewBox="0 0 12 12"><rect x="1" y="4" width="10" height="7" rx="1" fill="none" stroke="#eef6f6" stroke-width="1.100"/><path d="M6 4v7M1 7.300h10M4.200 4C2 2.500 3.500.8 6 3.800 8.500.8 10 2.500 7.800 4" fill="none" stroke="#eef6f6" stroke-width="1.100"/></svg><span class="it" style="top:380px">Coupons</span>
<svg class="ic" style="top:408.5px" width="11" height="11" viewBox="0 0 12 12"><path d="M2.800 3.200A4.600 4.600 0 1 1 2 6.500" fill="none" stroke="#eef6f6" stroke-width="1.200"/><path d="M0 5.500h4L2 8.300z" fill="#eef6f6"/><circle cx="6.600" cy="6.500" r="1.100" fill="#eef6f6"/></svg><span class="it" style="top:406px">Cashback</span>
<svg class="ic" style="top:433.5px" width="11" height="11" viewBox="0 0 12 12"><path d="M6 .8c2.200 0 3.700 1.600 3.700 4v2.500l1.300 2H1l1.300-2V4.800C2.300 2.400 3.800.8 6 .8z" fill="#eef6f6"/><path d="M4.800 10.500h2.400" stroke="#eef6f6" stroke-width="1.200"/></svg><span class="it" style="top:431px">Push Notification</span>
<svg class="ic" style="top:459.5px" width="11" height="11" viewBox="0 0 12 12"><rect x=".6" y="4.600" width="8.800" height="6.400" fill="none" stroke="#eef6f6" stroke-width="1.200"/><path d="M10.500 1v10" stroke="#eef6f6" stroke-width="1.600"/><path d="M9 2.500l1.500-1.500" stroke="#eef6f6" stroke-width="1"/></svg><span class="it" style="top:457px">Advertisement</span><svg class="chev" style="top:463.5px" width="7" height="5" viewBox="0 0 7 5"><path d="M.7.800l2.800 2.800L6.300.8" stroke="#eef6f6" stroke-width="1.200" fill="none"/></svg>
<svg class="ic" style="top:529.5px" width="11" height="11" viewBox="0 0 12 12"><rect x="4" y=".5" width="4" height="3.500" fill="#eef6f6"/><rect x=".5" y="8" width="4" height="3.500" fill="#eef6f6"/><rect x="7.500" y="8" width="4" height="3.500" fill="#eef6f6"/><path d="M6 4v2.200M2.500 8V6.200h7V8" fill="none" stroke="#eef6f6" stroke-width="1.100"/></svg><span class="it" style="top:527px">Categories</span><svg class="chev" style="top:533.5px" width="7" height="5" viewBox="0 0 7 5"><path d="M.7.800l2.800 2.800L6.300.8" stroke="#eef6f6" stroke-width="1.200" fill="none"/></svg>
<svg class="ic" style="top:554.5px" width="11" height="11" viewBox="0 0 12 12"><circle cx="6" cy="6" r="5" fill="none" stroke="#eef6f6" stroke-width="1.200"/><path d="M6 3.500v5M3.500 6h5" stroke="#eef6f6" stroke-width="1.200"/></svg><span class="it" style="top:552px">Addons</span>
<span class="sec" style="top:110.0px">POS SECTION</span>
<span class="sec" style="top:179.0px">ORDER MANAGEMENT</span>
<span class="sec" style="top:274.0px">PROMOTION MANAGEMENT</span>
<span class="sec" style="top:499.0px">FOOD MANAGEMENT</span>
<div class="abs" style="left:193px;top:0;width:3px;height:370px;background:#8fa3ab"></div>
<div class="abs" style="left:6px;top:559px;width:181px;height:40px;border-radius:4px;background:#87c5ca"></div>
<div class="abs" style="left:17px;top:568px;width:28px;height:28px;border-radius:14px;background:#e6f5ee"></div>
<svg class="abs" style="left:25px;top:576px" width="12" height="12" viewBox="0 0 12 12"><rect x=".6" y=".6" width="10.800" height="10.800" rx="1" fill="none" stroke="#8fc7c4" stroke-width="1.200"/><circle cx="6" cy="4.500" r="1.400" fill="#8fc7c4"/><path d="M3 9.500c0-2 6-2 6 0z" fill="#8fc7c4"/></svg>
<span class="abs" style="left:55px;top:565px;font-size:10.500px;font-weight:700;color:#334257;line-height:14px;white-space:nowrap">Admin User</span>
<span class="abs" style="left:55px;top:581px;font-size:9px;color:#334257;line-height:12px;white-space:nowrap">admin@admin.com</span>
<svg class="abs" style="left:166px;top:571px" width="9" height="5" viewBox="0 0 9 5"><path d="M0 0h9L4.500 5z" fill="#334257"/></svg>
</div>
<div id="main">
<div class="abs" style="left:24px;top:0;width:1px;height:585px;background:#e7eaf3"></div>
<div class="abs" style="left:1071px;top:0;width:1px;height:585px;background:#e7eaf3"></div>
<div class="abs" style="left:555px;top:-20px;width:210px;height:34px;border:1px solid #dfe4ef;border-radius:4px"></div>
<span class="abs" style="left:566px;top:-8.200px;font-size:9.750px;color:#1e2022;line-height:12px">All Zones</span>
<div class="abs" style="left:776px;top:-20px;width:196px;height:31.500px;border:1px solid #dfe4ef;border-radius:4px;overflow:hidden"><div class="abs" style="right:0;top:0;width:30px;height:32px;background:#99a5ba"></div></div>
<div class="abs" style="left:981px;top:-20px;width:75px;height:31.500px;border:1px solid #a5dede;border-radius:4px"></div>
<div class="abs" style="left:25px;top:25px;width:1046px;height:39px;background:#f8f9fd;border-top:1px solid #e7eaf3"></div>
<span class="th" style="left:37px">Sl</span><svg class="abs" style="left:53.3px;top:39.500px" width="5.500" height="8" viewBox="0 0 6 10"><path d="M3 0l3 4H0zM3 10L0 6h6z" fill="#d9ddea"/></svg>
<span class="th" style="left:94px">Store Information</span><svg class="abs" style="left:176.3px;top:39.500px" width="5.500" height="8" viewBox="0 0 6 10"><path d="M3 0l3 4H0zM3 10L0 6h6z" fill="#d9ddea"/></svg>
<span class="th" style="left:320px">Owner Information</span><svg class="abs" style="left:407.3px;top:39.500px" width="5.500" height="8" viewBox="0 0 6 10"><path d="M3 0l3 4H0zM3 10L0 6h6z" fill="#d9ddea"/></svg>
<span class="th" style="left:469px">Zone</span><svg class="abs" style="left:497.3px;top:39.500px" width="5.500" height="8" viewBox="0 0 6 10"><path d="M3 0l3 4H0zM3 10L0 6h6z" fill="#d9ddea"/></svg>
<span class="th" style="left:648px">Featured</span><svg class="abs" style="left:693.3px;top:39.500px" width="5.500" height="8" viewBox="0 0 6 10"><path d="M3 0l3 4H0zM3 10L0 6h6z" fill="#d9ddea"/></svg>
<span class="th" style="left:741px">Status</span><svg class="abs" style="left:775.3px;top:39.500px" width="5.500" height="8" viewBox="0 0 6 10"><path d="M3 0l3 4H0zM3 10L0 6h6z" fill="#d9ddea"/></svg>
<span class="th" style="left:822px">Pause Status</span><svg class="abs" style="left:885.3px;top:39.500px" width="5.500" height="8" viewBox="0 0 6 10"><path d="M3 0l3 4H0zM3 10L0 6h6z" fill="#d9ddea"/></svg>
<span class="th" style="left:977px">Action</span><svg class="abs" style="left:1012.3px;top:39.500px" width="5.500" height="8" viewBox="0 0 6 10"><path d="M3 0l3 4H0zM3 10L0 6h6z" fill="#d9ddea"/></svg>
<span class="t" style="left:38px;top:90.2px">1</span><div class="av" style="left:93.7px;top:78.3px"><svg class="abs" style="left:11.500px;top:11.500px" width="15" height="15" viewBox="0 0 15 15"><rect x=".8" y=".8" width="13.400" height="13.400" rx="1" fill="#dcefeb" stroke="#8cc6c4" stroke-width="1.500"/><circle cx="7.500" cy="5.600" r="1.800" fill="#8cc6c4"/><path d="M3.500 11.300c0-3 8-3 8 0z" fill="#8cc6c4"/></svg></div><span class="nm" style="left:139px;top:80.9px">Kesar Kitchen</span><span class="id" style="left:139px;top:97.7px">Id:39</span><span class="t" style="left:320px;top:81.9px">Gurprret kaur</span><span class="t ph" style="left:320px;top:97.5px;transform:scaleX(1.1);transform-origin:0 50%">9855303353</span><span class="t" style="left:469px;top:90.2px">Zirakpur <span style="margin:0 1.400px">+</span> Panchkula <span style="margin:0 .5px 0 2px">(</span>Full<span style="margin-left:.3px">)</span></span><div class="tg" style="left:649px;top:88.0px"><i></i></div><div class="tg" style="left:742px;top:88.0px"><i></i></div><div class="ac" style="top:73.8px"><b></b><span>ACTIVE</span></div><div class="pa" style="top:99.0px"><b></b><span>Pause</span></div><div class="bt" style="left:951px;top:84.8px;border-color:#ff8200;background:#fff3e6"><svg style="left:5px;top:6.800px" width="12" height="8.300" viewBox="0 0 13 9"><path d="M.6 4.500C2 1.800 4 .6 6.500.6s4.500 1.200 5.900 3.900C11 7.200 9 8.400 6.500 8.400S2 7.200.6 4.500z" fill="none" stroke="#ff8200" stroke-width="1.100"/><circle cx="6.500" cy="4.500" r="1.900" fill="#ff8200"/></svg></div><div class="bt" style="left:982px;top:84.8px;border-color:#107980;background:#f3fafa"><svg style="left:5px;top:4.300px" width="11.500" height="11.500" viewBox="0 0 12 12"><path d="M.5 11.500l.8-3.200L8 1.600l2.400 2.400-6.700 6.700z" fill="#107980"/><path d="M8.800.9a1.100 1.100 0 0 1 1.600 0l.8.800a1.100 1.100 0 0 1 0 1.600l-.5.500-2.400-2.400z" fill="#107980"/></svg></div><div class="bt" style="left:1014px;top:84.8px;border-color:#ff7b7b;background:#fff"><svg style="left:5.800px;top:4.300px" width="10.200" height="12" viewBox="0 0 11 13"><path d="M.5 2.200h10M3.800 2V.7h3.400V2" fill="none" stroke="#ff6d6d" stroke-width="1.200"/><path d="M1.800 4l.6 7.300c0 .6.500 1 1 1h4.200c.5 0 1-.4 1-1L9.200 4" fill="none" stroke="#ff6d6d" stroke-width="1.400"/></svg></div>
<span class="t" style="left:38px;top:155.4px">2</span><div class="av" style="left:93.7px;top:143.5px"><svg class="abs" style="left:11.500px;top:11.500px" width="15" height="15" viewBox="0 0 15 15"><rect x=".8" y=".8" width="13.400" height="13.400" rx="1" fill="#dcefeb" stroke="#8cc6c4" stroke-width="1.500"/><circle cx="7.500" cy="5.600" r="1.800" fill="#8cc6c4"/><path d="M3.500 11.300c0-3 8-3 8 0z" fill="#8cc6c4"/></svg></div><span class="nm" style="left:139px;top:146.9px">Abs Kitchen</span><span class="id" style="left:139px;top:162.9px">Id:38</span><span class="t" style="left:320px;top:147.9px">Sarthak Sajwan</span><span class="t ph" style="left:320px;top:162.7px;transform:scaleX(1.021);transform-origin:0 50%">+917717411039</span><span class="t" style="left:469px;top:155.4px">Demo Zone</span><div class="tg off" style="left:649px;top:153.2px"><i></i></div><div class="tg" style="left:742px;top:153.2px"><i></i></div><div class="ac" style="top:139.0px"><b></b><span>ACTIVE</span></div><div class="pa" style="top:164.2px"><b></b><span>Pause</span></div><div class="bt" style="left:951px;top:150.0px;border-color:#ff8200;background:#fff3e6"><svg style="left:5px;top:6.800px" width="12" height="8.300" viewBox="0 0 13 9"><path d="M.6 4.500C2 1.800 4 .6 6.500.6s4.500 1.200 5.900 3.900C11 7.200 9 8.400 6.500 8.400S2 7.200.6 4.500z" fill="none" stroke="#ff8200" stroke-width="1.100"/><circle cx="6.500" cy="4.500" r="1.900" fill="#ff8200"/></svg></div><div class="bt" style="left:982px;top:150.0px;border-color:#107980;background:#f3fafa"><svg style="left:5px;top:4.300px" width="11.500" height="11.500" viewBox="0 0 12 12"><path d="M.5 11.500l.8-3.200L8 1.600l2.400 2.400-6.700 6.700z" fill="#107980"/><path d="M8.800.9a1.100 1.100 0 0 1 1.600 0l.8.800a1.100 1.100 0 0 1 0 1.600l-.5.500-2.400-2.400z" fill="#107980"/></svg></div><div class="bt" style="left:1014px;top:150.0px;border-color:#ff7b7b;background:#fff"><svg style="left:5.800px;top:4.300px" width="10.200" height="12" viewBox="0 0 11 13"><path d="M.5 2.200h10M3.800 2V.7h3.400V2" fill="none" stroke="#ff6d6d" stroke-width="1.200"/><path d="M1.800 4l.6 7.300c0 .6.500 1 1 1h4.200c.5 0 1-.4 1-1L9.200 4" fill="none" stroke="#ff6d6d" stroke-width="1.400"/></svg></div>
<span class="t" style="left:38px;top:220.6px">3</span><div class="av" style="left:93.7px;top:208.7px"><svg class="abs" style="left:11.500px;top:11.500px" width="15" height="15" viewBox="0 0 15 15"><rect x=".8" y=".8" width="13.400" height="13.400" rx="1" fill="#dcefeb" stroke="#8cc6c4" stroke-width="1.500"/><circle cx="7.500" cy="5.600" r="1.800" fill="#8cc6c4"/><path d="M3.500 11.300c0-3 8-3 8 0z" fill="#8cc6c4"/></svg></div><span class="nm" style="left:139px;top:212.1px">arpita kitchen</span><span class="id" style="left:139px;top:228.1px">Id:37</span><span class="t" style="left:320px;top:213.1px">ekku lavya</span><span class="t ph" style="left:320px;top:227.9px;transform:scaleX(1.1);transform-origin:0 50%">+917876838900</span><span class="t" style="left:469px;top:220.6px">CHD <span style="margin:0 .5px 0 2px">(</span>FULL<span style="margin-left:.3px">)</span></span><div class="tg off" style="left:649px;top:218.4px"><i></i></div><div class="tg" style="left:742px;top:218.4px"><i></i></div><div class="ac" style="top:204.2px"><b></b><span>ACTIVE</span></div><div class="pa" style="top:229.4px"><b></b><span>Pause</span></div><div class="bt" style="left:951px;top:215.2px;border-color:#ff8200;background:#fff3e6"><svg style="left:5px;top:6.800px" width="12" height="8.300" viewBox="0 0 13 9"><path d="M.6 4.500C2 1.800 4 .6 6.500.6s4.500 1.200 5.900 3.900C11 7.200 9 8.400 6.500 8.400S2 7.200.6 4.500z" fill="none" stroke="#ff8200" stroke-width="1.100"/><circle cx="6.500" cy="4.500" r="1.900" fill="#ff8200"/></svg></div><div class="bt" style="left:982px;top:215.2px;border-color:#107980;background:#f3fafa"><svg style="left:5px;top:4.300px" width="11.500" height="11.500" viewBox="0 0 12 12"><path d="M.5 11.500l.8-3.200L8 1.600l2.400 2.400-6.700 6.700z" fill="#107980"/><path d="M8.800.9a1.100 1.100 0 0 1 1.600 0l.8.800a1.100 1.100 0 0 1 0 1.600l-.5.500-2.400-2.400z" fill="#107980"/></svg></div><div class="bt" style="left:1014px;top:215.2px;border-color:#ff7b7b;background:#fff"><svg style="left:5.800px;top:4.300px" width="10.200" height="12" viewBox="0 0 11 13"><path d="M.5 2.200h10M3.800 2V.7h3.400V2" fill="none" stroke="#ff6d6d" stroke-width="1.200"/><path d="M1.800 4l.6 7.300c0 .6.500 1 1 1h4.200c.5 0 1-.4 1-1L9.200 4" fill="none" stroke="#ff6d6d" stroke-width="1.400"/></svg></div>
<span class="t" style="left:38px;top:285.8px">4</span><div class="av" style="left:93.7px;top:273.9px"><svg class="abs" style="left:11.500px;top:11.500px" width="15" height="15" viewBox="0 0 15 15"><rect x=".8" y=".8" width="13.400" height="13.400" rx="1" fill="#dcefeb" stroke="#8cc6c4" stroke-width="1.500"/><circle cx="7.500" cy="5.600" r="1.800" fill="#8cc6c4"/><path d="M3.500 11.300c0-3 8-3 8 0z" fill="#8cc6c4"/></svg></div><span class="nm" style="left:139px;top:277.3px">dhruv kitchen</span><span class="id" style="left:139px;top:293.3px">Id:36</span><span class="t" style="left:320px;top:278.3px">arpita doggra</span><span class="t ph" style="left:320px;top:293.1px;transform:scaleX(1.095);transform-origin:0 50%">+917876838933</span><span class="t" style="left:469px;top:285.8px">Mohali <span style="margin:0 .5px 0 2px">(</span>Full<span style="margin-left:.3px">)</span></span><div class="tg off" style="left:649px;top:283.6px"><i></i></div><div class="tg" style="left:742px;top:283.6px"><i></i></div><div class="ac" style="top:269.4px"><b></b><span>ACTIVE</span></div><div class="pa" style="top:294.6px"><b></b><span>Pause</span></div><div class="bt" style="left:951px;top:280.4px;border-color:#ff8200;background:#fff3e6"><svg style="left:5px;top:6.800px" width="12" height="8.300" viewBox="0 0 13 9"><path d="M.6 4.500C2 1.800 4 .6 6.500.6s4.500 1.200 5.900 3.900C11 7.200 9 8.400 6.500 8.400S2 7.200.6 4.500z" fill="none" stroke="#ff8200" stroke-width="1.100"/><circle cx="6.500" cy="4.500" r="1.900" fill="#ff8200"/></svg></div><div class="bt" style="left:982px;top:280.4px;border-color:#107980;background:#f3fafa"><svg style="left:5px;top:4.300px" width="11.500" height="11.500" viewBox="0 0 12 12"><path d="M.5 11.500l.8-3.200L8 1.600l2.400 2.400-6.700 6.700z" fill="#107980"/><path d="M8.800.9a1.100 1.100 0 0 1 1.600 0l.8.800a1.100 1.100 0 0 1 0 1.600l-.5.500-2.400-2.400z" fill="#107980"/></svg></div><div class="bt" style="left:1014px;top:280.4px;border-color:#ff7b7b;background:#fff"><svg style="left:5.800px;top:4.300px" width="10.200" height="12" viewBox="0 0 11 13"><path d="M.5 2.200h10M3.800 2V.7h3.400V2" fill="none" stroke="#ff6d6d" stroke-width="1.200"/><path d="M1.800 4l.6 7.300c0 .6.500 1 1 1h4.200c.5 0 1-.4 1-1L9.200 4" fill="none" stroke="#ff6d6d" stroke-width="1.400"/></svg></div>
<span class="t" style="left:38px;top:351.0px">5</span><div class="av" style="left:93.7px;top:339.1px"><svg class="abs" style="left:11.500px;top:11.500px" width="15" height="15" viewBox="0 0 15 15"><rect x=".8" y=".8" width="13.400" height="13.400" rx="1" fill="#dcefeb" stroke="#8cc6c4" stroke-width="1.500"/><circle cx="7.500" cy="5.600" r="1.800" fill="#8cc6c4"/><path d="M3.500 11.300c0-3 8-3 8 0z" fill="#8cc6c4"/></svg></div><span class="nm" style="left:139px;top:342.5px">TEST KITCHEN</span><span class="id" style="left:139px;top:358.5px">Id:35</span><span class="t" style="left:320px;top:343.5px">ABC DEF</span><span class="t ph" style="left:320px;top:358.3px;transform:scaleX(1.064);transform-origin:0 50%">+919915223354</span><span class="t" style="left:469px;top:351.0px">CHD <span style="margin:0 .5px 0 2px">(</span>FULL<span style="margin-left:.3px">)</span></span><div class="tg off" style="left:649px;top:348.8px"><i></i></div><div class="tg" style="left:742px;top:348.8px"><i></i></div><div class="ac" style="top:334.6px"><b></b><span>ACTIVE</span></div><div class="pa" style="top:359.8px"><b></b><span>Pause</span></div><div class="bt" style="left:951px;top:345.6px;border-color:#ff8200;background:#fff3e6"><svg style="left:5px;top:6.800px" width="12" height="8.300" viewBox="0 0 13 9"><path d="M.6 4.500C2 1.800 4 .6 6.500.6s4.500 1.200 5.900 3.900C11 7.200 9 8.400 6.500 8.400S2 7.200.6 4.500z" fill="none" stroke="#ff8200" stroke-width="1.100"/><circle cx="6.500" cy="4.500" r="1.900" fill="#ff8200"/></svg></div><div class="bt" style="left:982px;top:345.6px;border-color:#107980;background:#f3fafa"><svg style="left:5px;top:4.300px" width="11.500" height="11.500" viewBox="0 0 12 12"><path d="M.5 11.500l.8-3.200L8 1.600l2.400 2.400-6.700 6.700z" fill="#107980"/><path d="M8.800.9a1.100 1.100 0 0 1 1.600 0l.8.800a1.100 1.100 0 0 1 0 1.600l-.5.500-2.400-2.400z" fill="#107980"/></svg></div><div class="bt" style="left:1014px;top:345.6px;border-color:#ff7b7b;background:#fff"><svg style="left:5.800px;top:4.300px" width="10.200" height="12" viewBox="0 0 11 13"><path d="M.5 2.200h10M3.800 2V.7h3.400V2" fill="none" stroke="#ff6d6d" stroke-width="1.200"/><path d="M1.800 4l.6 7.300c0 .6.500 1 1 1h4.200c.5 0 1-.4 1-1L9.200 4" fill="none" stroke="#ff6d6d" stroke-width="1.400"/></svg></div>
<span class="t" style="left:38px;top:416.2px">6</span><div class="av" style="left:93.7px;top:404.3px"><svg class="abs" style="left:11.500px;top:11.500px" width="15" height="15" viewBox="0 0 15 15"><rect x=".8" y=".8" width="13.400" height="13.400" rx="1" fill="#dcefeb" stroke="#8cc6c4" stroke-width="1.500"/><circle cx="7.500" cy="5.600" r="1.800" fill="#8cc6c4"/><path d="M3.500 11.300c0-3 8-3 8 0z" fill="#8cc6c4"/></svg></div><span class="nm" style="left:139px;top:407.7px">dummy Kitchen</span><span class="id" style="left:139px;top:423.7px">Id:34</span><span class="t" style="left:320px;top:408.7px">dhruv sethi</span><span class="t ph" style="left:320px;top:423.5px;transform:scaleX(1.1);transform-origin:0 50%">+918699264506</span><span class="t" style="left:469px;top:416.2px">CHD <span style="margin:0 .5px 0 2px">(</span>FULL<span style="margin-left:.3px">)</span></span><div class="tg" style="left:649px;top:414.0px"><i></i></div><div class="tg" style="left:742px;top:414.0px"><i></i></div><div class="ac" style="top:399.8px"><b></b><span>ACTIVE</span></div><div class="pa" style="top:425.0px"><b></b><span>Pause</span></div><div class="bt" style="left:951px;top:410.8px;border-color:#ff8200;background:#fff3e6"><svg style="left:5px;top:6.800px" width="12" height="8.300" viewBox="0 0 13 9"><path d="M.6 4.500C2 1.800 4 .6 6.500.6s4.500 1.200 5.900 3.900C11 7.200 9 8.400 6.500 8.400S2 7.200.6 4.500z" fill="none" stroke="#ff8200" stroke-width="1.100"/><circle cx="6.500" cy="4.500" r="1.900" fill="#ff8200"/></svg></div><div class="bt" style="left:982px;top:410.8px;border-color:#107980;background:#f3fafa"><svg style="left:5px;top:4.300px" width="11.500" height="11.500" viewBox="0 0 12 12"><path d="M.5 11.500l.8-3.200L8 1.600l2.400 2.400-6.700 6.700z" fill="#107980"/><path d="M8.800.9a1.100 1.100 0 0 1 1.600 0l.8.800a1.100 1.100 0 0 1 0 1.600l-.5.500-2.400-2.400z" fill="#107980"/></svg></div><div class="bt" style="left:1014px;top:410.8px;border-color:#ff7b7b;background:#fff"><svg style="left:5.800px;top:4.300px" width="10.200" height="12" viewBox="0 0 11 13"><path d="M.5 2.200h10M3.800 2V.7h3.400V2" fill="none" stroke="#ff6d6d" stroke-width="1.200"/><path d="M1.800 4l.6 7.300c0 .6.500 1 1 1h4.200c.5 0 1-.4 1-1L9.200 4" fill="none" stroke="#ff6d6d" stroke-width="1.400"/></svg></div>
<div class="abs" style="left:25px;top:476px;width:1046px;height:1px;background:#e7eaf3"></div>
<div class="abs" style="left:25px;top:489px;width:84px;height:23px;border:1px solid #eceff6;border-top:0;border-left:0"></div>
<div class="abs" style="left:121px;top:489px;width:64px;height:23px;border:1px solid #eceff6;border-top:0"></div>
<span class="t" style="left:44px;top:491px;font-size:9px">« Previous</span><span class="t ph" style="left:139px;top:491px;font-size:9px">Next »</span>
<span class="t" style="left:25px;top:506px;font-size:9px;letter-spacing:.1px">Showing 1 To 25 Of 33 Results</span>
<div class="abs" style="left:1070px;top:25px;width:2px;height:115px;background:#9c9c9c"></div>
<div class="abs" style="left:1068px;top:86px;width:40px;height:45px;border-radius:7px 0 0 7px;background:#fff;box-shadow:0 0 8px rgba(80,90,110,.18)"></div>
<svg class="abs" style="left:1085px;top:103px" width="11" height="13" viewBox="0 0 11 13"><path d="M1 0h1.500v3.500l1.500-1 1.500 1V0H10a1 1 0 0 1 1 1v11a1 1 0 0 1-1 1H1a1 1 0 0 1-1-1V1a1 1 0 0 1 1-1z" fill="#0a6666"/></svg>
<div class="abs" style="left:1097px;top:7px;width:2px;height:142px;background:#a9a9a9"></div>
</div>
<div id="dbg">
<svg class="abs" style="left:8px;top:2.800px" width="15" height="15" viewBox="0 0 15 15"><path d="M.5 2.300L3.300.600 6.200 2.300 3.300 4zM.5 2.300v8.900L6 14.500l5.600-3.300V8.600M3.300 4v5.600L6 11.200M6.200 2.300V8l2.700-1.200M6 11.200v3.300M6 11.200l5.600-2.600M3.300 9.600M8.900 3.700l2.800-1.700 2.900 1.700-2.900 1.700zM8.900 3.700v3.200l2.800 1.700 2.900-1.700V3.700M11.700 5.400v3.200" fill="none" stroke="#f2544a" stroke-width=".85" stroke-linejoin="round"/></svg>
<i class="s" style="left:29.6px"></i><i class="s" style="left:106.6px"></i><i class="s" style="left:155.8px"></i><i class="s" style="left:216.4px"></i><i class="s" style="left:275.2px"></i><i class="s" style="left:314.5px"></i><i class="s" style="left:390.9px"></i><i class="s" style="left:465.6px"></i><i class="s" style="left:501.1px"></i><i class="s" style="left:535.6px"></i><i class="s" style="left:583.1px"></i><i class="s" style="left:1034.5px"></i><i class="s" style="left:1088.7px"></i><i class="s" style="left:1138.5px"></i><i class="s" style="left:1192.4px"></i><i class="s" style="left:1216.1px"></i><i class="s" style="left:1241.6px"></i><i class="s" style="left:1266.5px"></i>
<span class="d" style="left:37.2px">Messages</span><span class="d" style="left:114.2px">Timeline</span><span class="d" style="left:163.1px">Exceptions</span><span class="d" style="left:224.0px">Views</span><span class="d" style="left:283.5px">Route</span><span class="d" style="left:322.1px">Queries</span><span class="d" style="left:399.0px">Models</span><span class="d" style="left:473.0px">Mails</span><span class="d" style="left:509.0px">Gate</span><span class="d" style="left:543.0px">Session</span><span class="d" style="left:590.5px">Request</span><span class="d" style="left:933.5px">GET admin<span style="margin:0 1.500px">/</span>store<span style="margin:0 1.500px">/</span>list</span><span class="d" style="left:1056.5px">40MB</span><span class="d" style="left:1109.8px">1.77s</span><span class="d" style="left:1159.9px">8.3.14</span>
<b class="bd" style="left:85.0px;width:16px">1</b><b class="bd" style="left:253.3px;width:16px">7</b><b class="bd" style="left:359.6px;width:26.5px">174</b><b class="bd" style="left:434.0px;width:26px">351</b>
<u class="bx" style="left:920.4px;top:6px"></u><u class="bx" style="left:1043.3px;top:6px"></u><u class="bx" style="left:1097.5px;top:6px"></u><u class="bx" style="left:1147.3px;top:4.5px"></u><u class="bx" style="left:1201.5px;top:6px"></u>
<svg class="abs" style="left:1225px;top:8px" width="11" height="7" viewBox="0 0 11 9" preserveAspectRatio="none"><path d="M0 0h3.500l1 1.200H9v1.600H2.800L0 7z" fill="#333"/><path d="M2.800 3.500H11L8.500 9H0z" fill="#333"/></svg><svg class="abs" style="left:1250.5px;top:7px" width="11" height="8" viewBox="0 0 11 8"><path d="M1 6.800l4.500-4.800L10 6.800" fill="none" stroke="#333" stroke-width="2"/></svg><svg class="abs" style="left:1276px;top:6.500px" width="9" height="9" viewBox="0 0 9 9"><path d="M1 1l7 7M8 1L1 8" stroke="#333" stroke-width="2.200"/></svg>
</div>
</div>
</div>
</body>
</html>
